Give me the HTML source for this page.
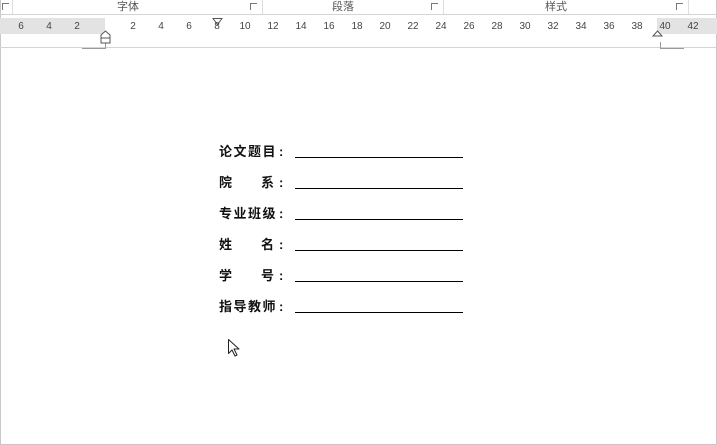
<!DOCTYPE html>
<html><head><meta charset="utf-8"><style>
*{margin:0;padding:0;box-sizing:border-box}
body{width:717px;height:445px;overflow:hidden;background:#fff;position:relative;font-family:"Liberation Sans","Noto Sans CJK SC",sans-serif}
.a{position:absolute}
.n{position:absolute;top:21px;font-size:10px;color:#444;transform:translateX(-50%)}
.t{position:absolute;font-size:13px;font-weight:bold;color:#111;left:219px;line-height:14px;letter-spacing:1.5px;font-family:"Liberation Sans","Noto Sans CJK SC",sans-serif}
.c{position:absolute;left:279px;font-size:13px;font-weight:bold;color:#111;line-height:14px}
.l{position:absolute;left:295px;width:168px;height:1px;background:#000}
.g{position:absolute;font-size:11px;color:#555;top:-2px}
.ic{position:absolute;top:3px;width:7px;height:7px;border-left:1px solid #777;border-top:1px solid #777}
</style></head><body>
<div class="a" style="left:0;top:0;width:717px;height:445px;border:1px solid #c8c8c8;border-top:none"></div>
<div class="a" style="left:0;top:14px;width:717px;height:1px;background:#d4d4d4"></div>
<div class="a" style="left:12px;top:0;width:1px;height:14px;background:#ddd"></div>
<div class="a" style="left:262px;top:0;width:1px;height:14px;background:#ddd"></div>
<div class="a" style="left:443px;top:0;width:1px;height:14px;background:#ddd"></div>
<div class="a" style="left:688px;top:0;width:1px;height:14px;background:#ddd"></div>
<div class="ic" style="left:2px"></div><div class="ic" style="left:250px"></div><div class="ic" style="left:431px"></div><div class="ic" style="left:676px"></div>
<div class="g" style="left:117px">字体</div>
<div class="g" style="left:332px">段落</div>
<div class="g" style="left:545px">样式</div>
<div class="a" style="left:0;top:18px;width:105px;height:16px;background:#e3e3e3"></div>
<div class="a" style="left:657px;top:18px;width:60px;height:16px;background:#e3e3e3"></div>
<div class="a" style="left:0;top:47px;width:717px;height:1px;background:#d4d4d4"></div>
<div class="a" style="left:82px;top:48px;width:24px;height:1px;background:#999"></div>
<div class="a" style="left:105px;top:42px;width:1px;height:6px;background:#999"></div>
<div class="a" style="left:660px;top:48px;width:24px;height:1px;background:#999"></div>
<div class="a" style="left:660px;top:42px;width:1px;height:6px;background:#999"></div>
<svg class="a" style="left:0;top:0" width="717" height="50">
<path d="M213 18.5h9l-4.5 6z" fill="#fff" stroke="#555"/>
<path d="M101 35l4.5-4 4.5 4v8h-9z M101 38h9" fill="#fff" stroke="#555"/>
<path d="M653 36l4.5-5 4.5 5z" fill="#fff" stroke="#555"/>
</svg>
<div class="n" style="left:21px">6</div><div class="n" style="left:49px">4</div><div class="n" style="left:77px">2</div>
<div class="n" style="left:133px">2</div><div class="n" style="left:161px">4</div><div class="n" style="left:189px">6</div><div class="n" style="left:217px">8</div>
<div class="n" style="left:245px">10</div><div class="n" style="left:273px">12</div><div class="n" style="left:301px">14</div><div class="n" style="left:329px">16</div>
<div class="n" style="left:357px">18</div><div class="n" style="left:385px">20</div><div class="n" style="left:413px">22</div><div class="n" style="left:441px">24</div>
<div class="n" style="left:469px">26</div><div class="n" style="left:497px">28</div><div class="n" style="left:525px">30</div><div class="n" style="left:553px">32</div>
<div class="n" style="left:581px">34</div><div class="n" style="left:609px">36</div><div class="n" style="left:637px">38</div><div class="n" style="left:665px">40</div><div class="n" style="left:693px">42</div>
<div class="t" style="top:145px">论文题目</div><div class="c" style="top:145px">:</div><div class="l" style="top:157px"></div>
<div class="t" style="top:176px">院</div><div class="t" style="top:176px;left:261px">系</div><div class="c" style="top:176px">:</div><div class="l" style="top:188px"></div>
<div class="t" style="top:207px">专业班级</div><div class="c" style="top:207px">:</div><div class="l" style="top:219px"></div>
<div class="t" style="top:238px">姓</div><div class="t" style="top:238px;left:261px">名</div><div class="c" style="top:238px">:</div><div class="l" style="top:250px"></div>
<div class="t" style="top:269px">学</div><div class="t" style="top:269px;left:261px">号</div><div class="c" style="top:269px">:</div><div class="l" style="top:281px"></div>
<div class="t" style="top:300px">指导教师</div><div class="c" style="top:300px">:</div><div class="l" style="top:312px"></div>
<svg class="a" style="left:227px;top:338px" width="14" height="20"><path d="M1.5 1.5v14l3.5-3.5 3 6 2-1-3-6h5z" fill="#fff" stroke="#222" stroke-linejoin="round"/></svg>
</body></html>
